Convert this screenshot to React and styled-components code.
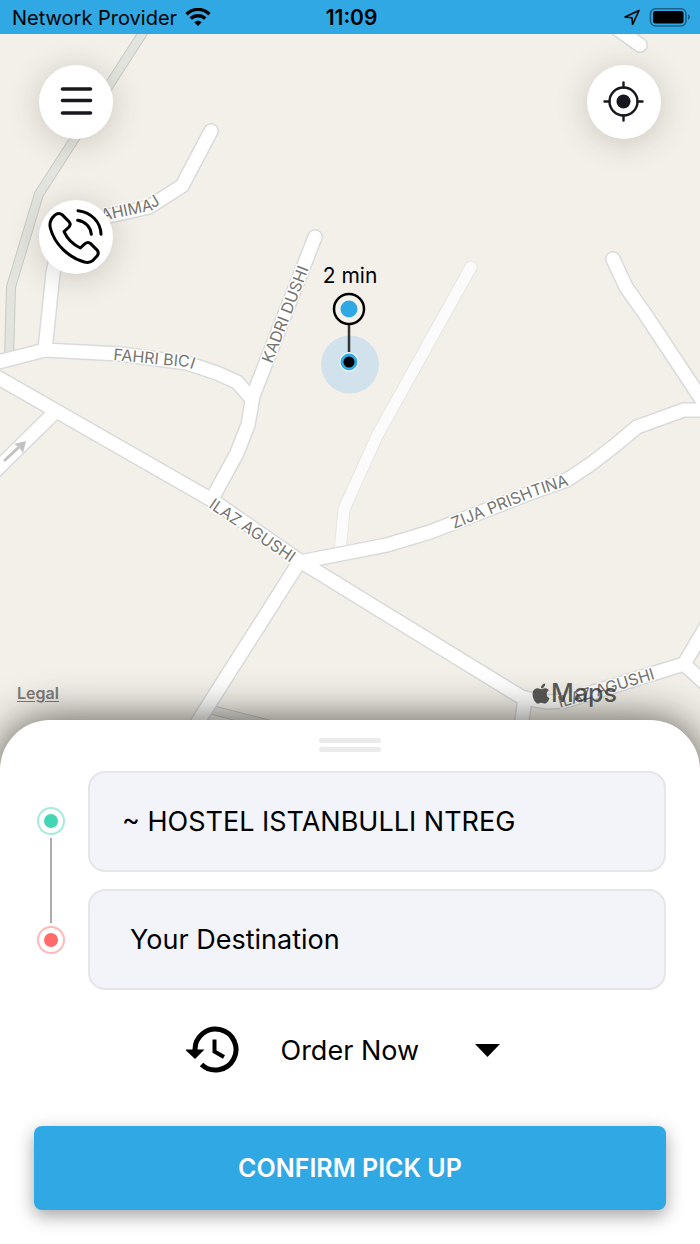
import React from 'react';
import styled, { createGlobalStyle } from 'styled-components';
import { FaApple } from 'react-icons/fa';

const GlobalStyle = createGlobalStyle`
  *, *::before, *::after { box-sizing: border-box; }
  body { margin: 0; background: #fff; }
  body, button, input, select { font-family: Inter, "Liberation Sans", sans-serif; }
`;

const Screen = styled.div`
  display: flex;
  flex-direction: column;
  min-height: 100vh;
  overflow: hidden;
  color: #000;
`;

const StatusBar = styled.header`
  display: grid;
  grid-template-columns: 1fr auto 1fr;
  align-items: center;
  height: 34px;
  padding: 2px 9px 0 12px;
  background: #2fa8e4;
  font-size: 20px;
  line-height: 32px;
`;

const StatusGroup = styled.div`
  display: flex;
  align-items: center;
  justify-content: ${(p) => (p.$end ? 'flex-end' : 'flex-start')};
  gap: 8px;
  white-space: nowrap;
`;

const Clock = styled.time`
  font-size: 21px;
  font-weight: 600;
`;

const MapArea = styled.main`
  position: relative;
  display: flex;
  flex-direction: column;
  flex: 1 0 736px;
  background: #f3f0ea;
`;

const MapDrawing = styled.svg`
  position: absolute;
  inset: 0;
  width: 100%;
  height: 100%;
`;

const StreetName = styled.text`
  font-family: Inter, "Liberation Sans", sans-serif;
  font-size: 16px;
  fill: #77756f;
  stroke: #fff;
  stroke-width: 3px;
  stroke-linejoin: round;
  paint-order: stroke;
`;

const PinText = styled.text`
  font-family: Inter, "Liberation Sans", sans-serif;
  font-size: 21px;
  fill: #000;
  text-anchor: middle;
`;

const Controls = styled.div`
  position: relative;
  display: flex;
  align-items: flex-start;
  justify-content: space-between;
  padding: 31px 39px;
`;

const ControlStack = styled.div`
  display: flex;
  flex-direction: column;
  gap: 61px;
`;

const RoundButton = styled.button`
  display: flex;
  width: 74px;
  height: 74px;
  padding: 0;
  border: 0;
  border-radius: 50%;
  background: #fff;
  box-shadow: 0 4px 32px rgba(60, 50, 30, 0.22);
  cursor: pointer;

  svg { width: 74px; height: 74px; }
`;

const MapCredits = styled.div`
  position: relative;
  display: flex;
  align-items: center;
  justify-content: space-between;
  margin-top: auto;
  padding: 0 83px 61px 17px;
`;

const LegalLink = styled.a`
  color: #7d7c79;
  font-size: 16px;
  font-weight: 600;
  line-height: 32px;
  text-underline-offset: 2px;
`;

const MapsBrand = styled.span`
  display: flex;
  align-items: center;
  color: rgba(50, 50, 50, 0.8);
  font-size: 25px;
  font-weight: 500;
  line-height: 32px;

  svg { width: 20px; height: 23px; }
`;

const Sheet = styled.section`
  position: relative;
  display: flex;
  flex-direction: column;
  margin-top: -50px;
  padding: 18px 34px 34px;
  border-radius: 50px 50px 0 0;
  background: #fff;
  box-shadow: 0 0 44px rgba(20, 18, 10, 0.72);
`;

const Handle = styled.div`
  display: flex;
  flex-direction: column;
  align-self: center;
  justify-content: space-between;
  width: 62px;
  height: 14px;
  margin-bottom: 19px;

  &::before, &::after {
    content: '';
    height: 5px;
    border-radius: 3px;
    background: #ebebeb;
  }
`;

const Route = styled.form`
  display: grid;
  grid-template-columns: 34px 1fr;
  column-gap: 20px;
`;

const Rail = styled.div`
  display: flex;
  flex-direction: column;
  align-items: center;
  gap: 3px;
  padding: 36px 0;
`;

const Stop = styled.span`
  display: flex;
  align-items: center;
  justify-content: center;
  width: 28px;
  height: 28px;
  border: 2px solid ${(p) => p.$ring};
  border-radius: 50%;

  &::before {
    content: '';
    width: 14px;
    height: 14px;
    border-radius: 50%;
    background: ${(p) => p.$color};
  }
`;

const RailLine = styled.span`
  flex: 1;
  width: 2px;
  background: #acacac;
`;

const Fields = styled.div`
  display: flex;
  flex-direction: column;
  gap: 17px;
`;

const FieldLabel = styled.label`
  display: flex;
`;

const Field = styled.input`
  width: 100%;
  height: 101px;
  padding: 0 ${(p) => p.$inset}px;
  border: 2px solid #e6e5e7;
  border-radius: 17px;
  background: #f3f4f9;
  color: #000;
  font-size: 27px;
  outline: 0;

  &::placeholder { color: #000; opacity: 1; }
`;

const OrderRow = styled.div`
  display: flex;
  align-items: center;
  justify-content: center;
  gap: 42px;
  margin: 31px 0 47px;
  padding-right: 15px;
`;

const SelectBox = styled.div`
  display: grid;
  grid-template-columns: 1fr 26px;
  align-items: center;
  width: 219px;

  svg {
    grid-area: 1 / 2;
    pointer-events: none;
  }
`;

const TimeSelect = styled.select`
  grid-area: 1 / 1 / 2 / 3;
  height: 58px;
  padding: 0;
  border: 0;
  appearance: none;
  background: transparent;
  color: #000;
  font-size: 27px;
`;

const ConfirmButton = styled.button`
  height: 84px;
  border: 0;
  border-radius: 8px;
  background: #2fa8e4;
  box-shadow: 0 6px 18px rgba(0, 0, 0, 0.36);
  color: #fff;
  font-size: 25px;
  font-weight: 600;
  cursor: pointer;
`;

const roads = [
  'M211 131 L182 186 L149 207 L100 218 L60 240 L53 273 L45 350',
  'M-10 364 L45 350 L120 354 L187 363 L217 373 L237 382 L251 398',
  'M315 237 L253 396 L248 425 L237 453 L212 499',
  'M-10 373 L212 500 L300 561 L523 698 L547 702 L565 701 L684 664 L710 620',
  'M684 664 L710 688',
  'M55 412 L-10 476',
  'M300 562 L387 545 L430 532 L530 493 L567 480 L591 464 L613 447 L637 427 L684 410 L710 410',
  'M613 259 L626 287 L645 314 L704 403',
  'M298 564 L199 720 L165 774',
  'M525 698 L522 720 L514 774',
  'M640 45 L605 20',
];

const greyRoads = ['M146 28 L39 194 L11 287 L9 358', 'M205 708 L320 738'];
const faintRoad = 'M471 267 L378 434 L344 509 L340 552';

const streets = [
  { id: 'rahimaj', d: 'M92 223 L149 211 L190 186', name: 'RAHIMAJ' },
  { id: 'fahri', d: 'M113 360 L187 367 L217 377', name: 'FAHRI BICI' },
  { id: 'kadri', d: 'M272 364 L318 245', name: 'KADRI DUSHI' },
  { id: 'ilaz', d: 'M208 507 L310 576', name: 'ILAZ AGUSHI' },
  { id: 'zija', d: 'M454 529 L533 497 L600 475', name: 'ZIJA PRISHTINA' },
  { id: 'ilaz-east', d: 'M560 708 L700 665', name: 'ILAZ AGUSHI' },
];

function CityMap() {
  return (
    <MapDrawing viewBox="0 34 700 736" preserveAspectRatio="xMidYMid slice" aria-label="Map">
      <g fill="none" strokeLinejoin="miter">
        {greyRoads.map((d) => <path key={d} d={d} stroke="#c9cac2" strokeWidth="10" />)}
        {greyRoads.map((d) => <path key={d} d={d} stroke="#e2e4df" strokeWidth="8" />)}
        <path d={faintRoad} stroke="#e6e6e3" strokeWidth="13" strokeLinecap="round" />
        <path d={faintRoad} stroke="#fbfbfb" strokeWidth="11" strokeLinecap="round" />
        {roads.map((d) => <path key={d} d={d} stroke="#d9dbdb" strokeWidth="16" strokeLinecap="round" />)}
        {roads.map((d) => <path key={d} d={d} stroke="#fff" strokeWidth="13" strokeLinecap="round" />)}
        <path d="M4 461 L19 447" stroke="#c2c2c2" strokeWidth="3" />
      </g>
      <path d="M26 441 L14 444 L19 447 L23 453 Z" fill="#c2c2c2" />
      {streets.map((s) => (
        <g key={s.id}>
          <path id={s.id} d={s.d} fill="none" />
          <StreetName><textPath href={`#${s.id}`}>{s.name}</textPath></StreetName>
        </g>
      ))}
      <circle cx="350" cy="364.500" r="29" fill="#d2e2ed" />
      <path d="M349 323 V352" stroke="#333" strokeWidth="2.500" />
      <circle cx="349" cy="309" r="15" fill="#f6f3ed" stroke="#000" strokeWidth="2.500" />
      <circle cx="349" cy="309" r="8.500" fill="#2fa8e4" />
      <circle cx="349" cy="362" r="9.500" fill="#fff" />
      <circle cx="349" cy="362" r="8.500" fill="#2fa8e4" />
      <circle cx="349" cy="362" r="5.500" fill="#000" />
      <PinText x="350" y="283">2 min</PinText>
    </MapDrawing>
  );
}

const WifiIcon = () => (
  <svg width="26" height="20" viewBox="0 0 26 20" fill="none" stroke="#000" strokeWidth="3.400" aria-label="Wi-Fi">
    <path d="M1.500 6.200 C8 -0.200 18 -0.200 24.500 6.200" />
    <path d="M5.700 10.600 C10 6.700 16 6.700 20.300 10.600" />
    <path d="M9.300 14.300 C11.500 12.200 14.500 12.200 16.700 14.300 L13 18 Z" fill="#000" stroke="none" />
  </svg>
);

const LocationIcon = () => (
  <svg width="18" height="18" viewBox="0 0 18 18" fill="none" stroke="#000" strokeWidth="1.600" strokeLinejoin="round" aria-label="Location">
    <path d="M16 1.500 L2 8 L9 8.800 L9.600 15.500 Z" />
  </svg>
);

const BatteryIcon = () => (
  <svg width="42" height="20" viewBox="0 0 42 20" aria-label="Battery full">
    <rect x="1.500" y="0.800" width="35.500" height="17.200" rx="5" fill="none" stroke="#1b6289" strokeWidth="1.600" />
    <rect x="4" y="3" width="30.500" height="12.500" rx="2.500" fill="#000" />
    <path d="M39 6 Q41 7 41 9 Q41 11 39 12 Z" fill="#1b6289" />
  </svg>
);

const MenuIcon = () => (
  <svg viewBox="0 0 74 74" stroke="#17171e" strokeWidth="3.600" strokeLinecap="round" aria-hidden="true">
    <path d="M23.500 24 H51.500 M23.500 35.500 H51.500 M23.500 48 H51.500" />
  </svg>
);

const PhoneIcon = () => (
  <svg viewBox="118 600 222 222" fill="none" stroke="#000" strokeWidth="9" strokeLinecap="round" strokeLinejoin="round" aria-hidden="true">
    <path d="M164 647 L169 643 Q179 637 187 644 L208 665 Q215 673 208 681 L193 695 C203 717 219 733 242 744 L256 731 Q265 724 273 731 L293 751 Q299 760 292 768 L280 781 Q270 790 254 786 C207 773 164 732 152 684 Q147 663 164 647 Z" />
    <path d="M235 632 C273 636 303 665 304 703" />
    <path d="M234 661 C257 664 273 681 275 703" />
  </svg>
);

const LocateIcon = () => (
  <svg viewBox="0 0 74 74" fill="none" stroke="#17171e" strokeWidth="2.400" strokeLinecap="round" aria-hidden="true">
    <circle cx="36.500" cy="36.500" r="14" />
    <circle cx="36.500" cy="36.500" r="7" fill="#17171e" stroke="none" />
    <path d="M36.500 17.500 V22.500 M36.500 50.500 V55.500 M17.500 36.500 H22.500 M50.500 36.500 H55.500" />
  </svg>
);

const HistoryIcon = () => (
  <svg width="53" height="48" viewBox="0 0 53 48" fill="none" stroke="#000" strokeWidth="5" aria-hidden="true">
    <path d="M9 24 A20.500 20.500 0 1 1 15.500 38.500" />
    <path d="M-1 23.500 H18.500 L9 33 Z" fill="#000" stroke="none" />
    <path d="M28.500 13.500 V25.500 L38 31" strokeWidth="4" />
  </svg>
);

export default function App() {
  return (
    <Screen>
      <GlobalStyle />
      <StatusBar>
        <StatusGroup><span>Network Provider</span><WifiIcon /></StatusGroup>
        <Clock>11:09</Clock>
        <StatusGroup $end><LocationIcon /><BatteryIcon /></StatusGroup>
      </StatusBar>
      <MapArea>
        <CityMap />
        <Controls>
          <ControlStack>
            <RoundButton aria-label="Menu"><MenuIcon /></RoundButton>
            <RoundButton aria-label="Call"><PhoneIcon /></RoundButton>
          </ControlStack>
          <RoundButton aria-label="My location"><LocateIcon /></RoundButton>
        </Controls>
        <MapCredits>
          <LegalLink href="#legal">Legal</LegalLink>
          <MapsBrand><FaApple />Maps</MapsBrand>
        </MapCredits>
      </MapArea>
      <Sheet>
        <Handle />
        <Route>
          <Rail>
            <Stop $color="#43d6b4" $ring="#a5ecdb" />
            <RailLine />
            <Stop $color="#ff6b6b" $ring="#ffb9b9" />
          </Rail>
          <Fields>
            <FieldLabel>
              <Field aria-label="Pick up" $inset={32} defaultValue="~ HOSTEL ISTANBULLI NTREG" />
            </FieldLabel>
            <FieldLabel>
              <Field aria-label="Destination" $inset={40} placeholder="Your Destination" />
            </FieldLabel>
          </Fields>
        </Route>
        <OrderRow>
          <HistoryIcon />
          <SelectBox>
            <TimeSelect aria-label="Order time" defaultValue="now">
              <option value="now">Order Now</option>
            </TimeSelect>
            <svg width="26" height="14" viewBox="0 0 26 14" aria-hidden="true">
              <path d="M1 1 H26 L13.500 14 Z" />
            </svg>
          </SelectBox>
        </OrderRow>
        <ConfirmButton type="button">CONFIRM PICK UP</ConfirmButton>
      </Sheet>
    </Screen>
  );
}
